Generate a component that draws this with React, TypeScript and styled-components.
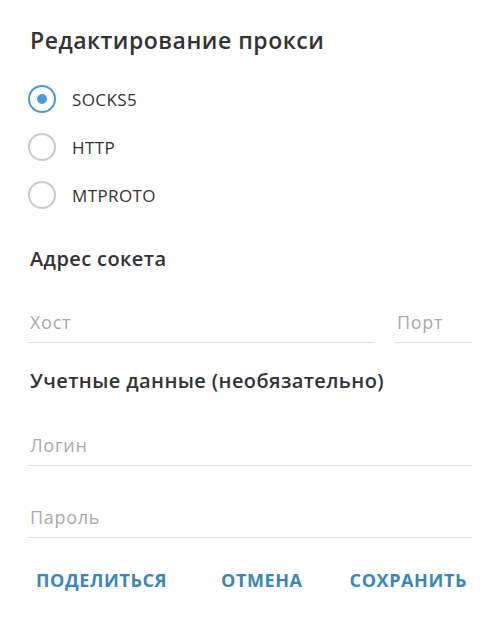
import React from "react";
import styled, { createGlobalStyle } from "styled-components";

const GlobalStyle = createGlobalStyle`
  html, body {
    margin: 0;
    padding: 0;
    background: #ffffff;
  }
  body {
    font-family: "Open Sans", "Noto Sans", sans-serif;
    -webkit-font-smoothing: antialiased;
  }
`;

// Styled Components
const Dialog = styled.div`
  width: 500px;
  height: 622px;
  box-sizing: border-box;
  padding: 25px 28px 0 30px;
  display: flex;
  flex-direction: column;
  background: #fff;
`;

const Title = styled.h1`
  margin: 0;
  font-size: 23px;
  font-weight: 600;
  letter-spacing: 0.5px;
  color: #333;
  line-height: 30px;
`;

const RadioList = styled.div`
  display: flex;
  flex-direction: column;
  gap: 20px;
  margin-top: 30px;
`;

const RadioRow = styled.label`
  display: flex;
  align-items: center;
  gap: 16px;
  height: 28px;
  margin-left: -2px;
`;

const RadioCircle = styled.span<{ $checked?: boolean }>`
  width: 24px;
  height: 24px;
  border-radius: 50%;
  border: 2px solid ${({ $checked }) => ($checked ? "#4a9ad4" : "#c9c9c9")};
  display: flex;
  align-items: center;
  justify-content: center;

  &::after {
    content: "";
    width: 10px;
    height: 10px;
    border-radius: 50%;
    background: #4a9ad4;
    display: ${({ $checked }) => ($checked ? "block" : "none")};
  }
`;

const RadioText = styled.span`
  font-size: 17px;
  font-weight: 500;
  letter-spacing: 0.4px;
  color: #333;
`;

const SectionHeading = styled.h2<{ $top: number }>`
  margin: ${({ $top }) => $top}px 0 0;
  font-size: 20px;
  font-weight: 600;
  letter-spacing: 0.4px;
  color: #333;
  line-height: 26px;
`;

const FieldRow = styled.div`
  display: flex;
  gap: 23px;
`;

const Field = styled.div<{ $width?: number; $grow?: boolean; $top: number }>`
  ${({ $width }) => ($width ? `width: ${$width}px;` : "")}
  ${({ $grow }) => ($grow ? "flex: 1;" : "")}
  margin-top: ${({ $top }) => $top}px;
  margin-left: -2px;
  padding: 0 0 8px 2px;
  border-bottom: 1px solid #e2e2e2;
  font-size: 18px;
  letter-spacing: 0.7px;
  color: #a9a9a9;
  line-height: 24px;
`;

const Actions = styled.div`
  display: flex;
  align-items: center;
  margin-top: 30px;
  padding-left: 6px;
  line-height: 24px;
`;

const ActionButton = styled.button`
  border: none;
  background: none;
  padding: 0;
  font-family: inherit;
  font-size: 18px;
  font-weight: 700;
  line-height: 24px;
  letter-spacing: 0.6px;
  color: #3a87b8;
  cursor: pointer;
`;

const Spacer = styled.div`
  flex: 1;
`;

const RightActions = styled.div`
  display: flex;
  gap: 47px;
  margin-right: 5px;
`;

const protocols = ["SOCKS5", "HTTP", "MTPROTO"];

const App: React.FC = () => {
  return (
    <>
      <GlobalStyle />
      <Dialog>
        <Title>Редактирование прокси</Title>
        <RadioList>
          {protocols.map((p, i) => (
            <RadioRow key={p}>
              <RadioCircle $checked={i === 0} />
              <RadioText>{p}</RadioText>
            </RadioRow>
          ))}
        </RadioList>

        <SectionHeading $top={37}>Адрес сокета</SectionHeading>
        <FieldRow>
          <Field $top={38} $grow>
            Хост
          </Field>
          <Field $top={38} $width={75}>
            Порт
          </Field>
        </FieldRow>

        <SectionHeading $top={25}>Учетные данные (необязательно)</SectionHeading>
        <Field $top={39}>Логин</Field>
        <Field $top={39}>Пароль</Field>

        <Actions>
          <ActionButton>ПОДЕЛИТЬСЯ</ActionButton>
          <Spacer />
          <RightActions>
            <ActionButton>ОТМЕНА</ActionButton>
            <ActionButton>СОХРАНИТЬ</ActionButton>
          </RightActions>
        </Actions>
      </Dialog>
    </>
  );
};

export default App;
